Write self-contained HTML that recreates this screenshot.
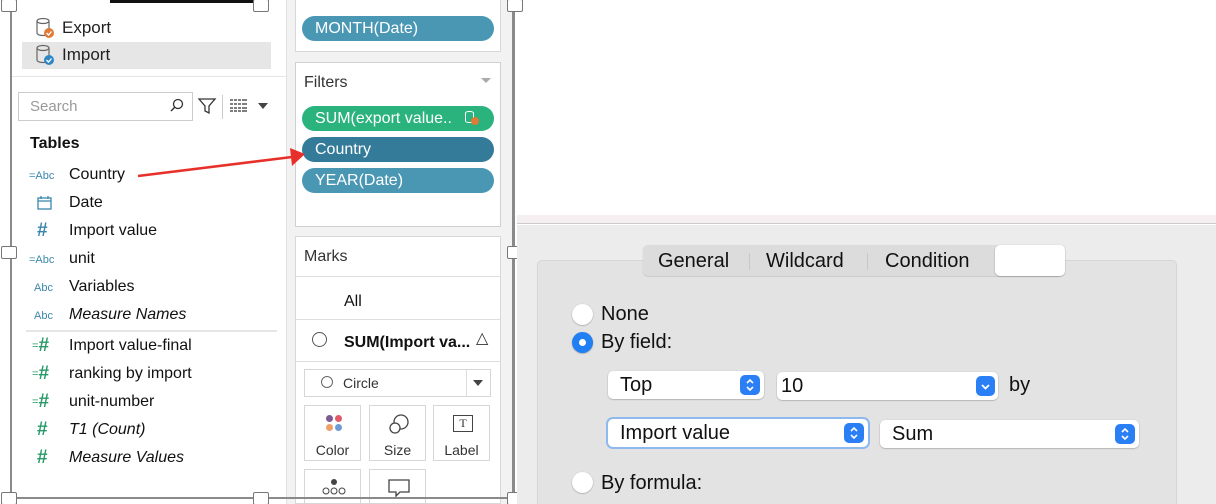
<!DOCTYPE html>
<html><head><meta charset="utf-8"><style>
*{margin:0;padding:0;box-sizing:border-box}
html,body{width:1216px;height:504px;overflow:hidden}
body{position:relative;background:#fff;font-family:"Liberation Sans",sans-serif;color:#222}
.a{position:absolute}
.h{position:absolute;width:16px;height:13px;background:#fff;border:1px solid #777;border-radius:2px}
.pill{position:absolute;left:302px;width:192px;height:25px;border-radius:13px;color:#fff;font-size:16px;line-height:25px;padding-left:13px}
.f{position:absolute;left:69px;font-size:16px;color:#111}
.ic{position:absolute;font-size:11px;color:#3a87ad}
.hash{position:absolute;font-size:19px;color:#2a9a6a;font-weight:bold;line-height:20px}
.hash small{font-size:11px;font-weight:normal;vertical-align:2px}
.mb{position:absolute;width:57px;height:56px;border:1px solid #d6d6d6;background:#fff;font-size:14px;color:#333;text-align:center}
.sel{position:absolute;height:28px;background:#fff;border-radius:5px;box-shadow:0 0.5px 1.5px rgba(0,0,0,.35);font-size:20px;line-height:28px;padding-left:12px;color:#111}
.st{position:absolute;right:4px;top:4px;width:20px;height:20px;border-radius:5px;background:#2b7ff5}
.rad{position:absolute;width:21px;height:21px;border-radius:50%;background:#fff;box-shadow:0 0.5px 1.5px rgba(0,0,0,.35)}
.lb{position:absolute;font-size:20px;color:#111}
</style></head><body>
<!-- middle column -->
<div class="a" style="left:286px;top:0;width:226px;height:504px;background:#f2f2f2;border-left:1px solid #e2e2e2"></div>
<div class="a" style="left:295px;top:0;width:206px;height:52px;background:#fff;border:1px solid #d8d8d8;border-top:none"></div>
<div class="pill" style="top:16px;background:#4a97b4">MONTH(Date)</div>
<div class="a" style="left:295px;top:62px;width:206px;height:165px;background:#fff;border:1px solid #d0d0d0"></div>
<div class="a" style="left:304px;top:74px;font-size:16px;color:#333">Filters</div>
<div class="a" style="left:481px;top:78px;border:5px solid transparent;border-top:5px solid #aaa"></div>
<div class="pill" style="top:106px;background:#2bb37e">SUM(export value..</div>
<div class="a" style="left:465px;top:111px;width:9px;height:12px;border:1px solid #fff;border-radius:4px/2px"></div>
<div class="a" style="left:471px;top:117px;width:8px;height:8px;border-radius:50%;background:#e07a35"></div>
<div class="pill" style="top:137px;background:#347b99">Country</div>
<div class="pill" style="top:168px;background:#4a97b4">YEAR(Date)</div>
<div class="a" style="left:295px;top:236px;width:206px;height:268px;background:#fff;border:1px solid #d8d8d8"></div>
<div class="a" style="left:304px;top:248px;font-size:16px;color:#333">Marks</div>
<div class="a" style="left:296px;top:276px;width:204px;height:1px;background:#ddd"></div>
<div class="a" style="left:344px;top:293px;font-size:16px;color:#111">All</div>
<div class="a" style="left:296px;top:319px;width:204px;height:1px;background:#ddd"></div>
<div class="a" style="left:312px;top:332px;width:15px;height:15px;border:1.5px solid #555;border-radius:50%"></div>
<div class="a" style="left:344px;top:334px;font-size:16px;font-weight:bold;color:#111">SUM(Import va...</div>
<div class="a" style="left:476px;top:328px;font-size:16px;color:#333">△</div>
<div class="a" style="left:296px;top:361px;width:204px;height:1px;background:#ddd"></div>
<div class="a" style="left:304px;top:369px;width:187px;height:28px;border:1px solid #d6d6d6"></div>
<div class="a" style="left:466px;top:370px;width:1px;height:26px;background:#ddd"></div>
<div class="a" style="left:473px;top:380px;border:5px solid transparent;border-top:6px solid #444"></div>
<div class="a" style="left:321px;top:376px;width:12px;height:12px;border:1px solid #666;border-radius:50%"></div>
<div class="a" style="left:343px;top:375px;font-size:14px;color:#333">Circle</div>
<div class="mb" style="left:304px;top:405px"><div style="position:absolute;left:21px;top:9px;width:16px;height:18px">
<span style="position:absolute;left:0;top:0;width:7px;height:7px;border-radius:50%;background:#7d5a92"></span><span style="position:absolute;left:9px;top:0;width:7px;height:7px;border-radius:50%;background:#e15a6a"></span><span style="position:absolute;left:0;top:9px;width:7px;height:7px;border-radius:50%;background:#ef9f6a"></span><span style="position:absolute;left:9px;top:9px;width:7px;height:7px;border-radius:50%;background:#6d9bd3"></span></div><div style="position:absolute;top:36px;width:100%">Color</div></div>
<div class="mb" style="left:369px;top:405px"><svg style="position:absolute;left:18px;top:7px" width="22" height="22"><circle cx="13" cy="9" r="7" fill="none" stroke="#444" stroke-width="1.3"/><circle cx="7" cy="15" r="5" fill="#fff" stroke="#444" stroke-width="1.3"/></svg><div style="position:absolute;top:36px;width:100%">Size</div></div>
<div class="mb" style="left:433px;top:405px"><div style="position:absolute;left:19px;top:9px;width:20px;height:17px;border:1.3px solid #444;font-family:'Liberation Serif';font-size:12px;line-height:14px">T</div><div style="position:absolute;top:36px;width:100%">Label</div></div>
<div class="mb" style="left:304px;top:469px;height:35px"><svg style="position:absolute;left:16px;top:8px" width="26" height="20"><circle cx="13" cy="4" r="3" fill="#444"/><circle cx="5" cy="13" r="3" fill="none" stroke="#444"/><circle cx="13" cy="13" r="3" fill="none" stroke="#444"/><circle cx="21" cy="13" r="3" fill="none" stroke="#444"/></svg></div>
<div class="mb" style="left:369px;top:469px;height:35px"><svg style="position:absolute;left:17px;top:8px" width="24" height="20"><path d="M2 2H22V14H13L9 18V14H2Z" fill="none" stroke="#444" stroke-width="1.3"/></svg></div>

<!-- left panel -->
<div class="a" style="left:22px;top:42px;width:249px;height:27px;background:#e6e6e6"></div>
<svg class="a" style="left:35px;top:17px" width="20" height="22"><path d="M2 4a6 2.5 0 0 1 12 0v12a6 2.5 0 0 1-12 0z M2 4a6 2.5 0 0 0 12 0" fill="none" stroke="#666" stroke-width="1.2"/><circle cx="14" cy="16" r="5" fill="#e07a35"/><path d="M11.5 16l2 2 3-3.5" stroke="#fff" fill="none" stroke-width="1.3"/></svg>
<div class="a" style="left:62px;top:18px;font-size:17px;color:#222">Export</div>
<svg class="a" style="left:35px;top:44px" width="20" height="22"><path d="M2 4a6 2.5 0 0 1 12 0v12a6 2.5 0 0 1-12 0z M2 4a6 2.5 0 0 0 12 0" fill="none" stroke="#666" stroke-width="1.2"/><circle cx="14" cy="16" r="5" fill="#2f86c4"/><path d="M11.5 16l2 2 3-3.5" stroke="#fff" fill="none" stroke-width="1.3"/></svg>
<div class="a" style="left:62px;top:45px;font-size:17px;color:#222">Import</div>
<div class="a" style="left:12px;top:76px;width:274px;height:1px;background:#e6e6e6"></div>
<div class="a" style="left:18px;top:92px;width:175px;height:29px;border:1px solid #ccc;font-size:15px;color:#999;line-height:27px;padding-left:11px">Search</div>
<svg class="a" style="left:169px;top:98px" width="16" height="16"><circle cx="9" cy="6" r="4.5" fill="none" stroke="#333" stroke-width="1.3"/><path d="M6 9L2 13" stroke="#333" stroke-width="1.5"/></svg>
<svg class="a" style="left:197px;top:96px" width="20" height="20"><path d="M2 3H18L12 10V17L8 15V10Z" fill="none" stroke="#333" stroke-width="1.3"/></svg>
<div class="a" style="left:222px;top:95px;width:1px;height:24px;background:#ccc"></div>
<svg class="a" style="left:230px;top:99px" width="18" height="13"><g stroke="#555" stroke-width="1.5"><path d="M0 1H17M0 5H17M0 9H17M0 12H17"/></g><g stroke="#fff" stroke-width="1"><path d="M3.5 0V13M7.5 0V13M11.5 0V13"/></g></svg>
<div class="a" style="left:258px;top:103px;border:5px solid transparent;border-top:6px solid #444"></div>
<div class="a" style="left:30px;top:135px;font-size:16px;font-weight:bold;color:#111">Tables</div>
<div class="ic" style="left:29px;top:170px">=Abc</div><div class="f" style="top:166px">Country</div>
<svg class="a" style="left:37px;top:195px" width="15" height="16"><rect x="1" y="3" width="13" height="11" fill="none" stroke="#3a87ad" stroke-width="1.3"/><path d="M1 6H14M4 1V4M11 1V4" stroke="#3a87ad" stroke-width="1.3"/></svg>
<div class="f" style="top:194px">Date</div>
<div class="hash" style="left:37px;top:221px;color:#3a87ad">#</div><div class="f" style="top:222px">Import value</div>
<div class="ic" style="left:29px;top:254px">=Abc</div><div class="f" style="top:250px">unit</div>
<div class="ic" style="left:34px;top:282px">Abc</div><div class="f" style="top:278px">Variables</div>
<div class="ic" style="left:34px;top:310px">Abc</div><div class="f" style="top:306px;font-style:italic">Measure Names</div>
<div class="a" style="left:26px;top:330px;width:251px;height:2px;background:#e6e6e6"></div>
<div class="hash" style="left:32px;top:336px"><small>=</small>#</div><div class="f" style="top:337px">Import value-final</div>
<div class="hash" style="left:32px;top:364px"><small>=</small>#</div><div class="f" style="top:365px">ranking by import</div>
<div class="hash" style="left:32px;top:392px"><small>=</small>#</div><div class="f" style="top:393px">unit-number</div>
<div class="hash" style="left:37px;top:420px">#</div><div class="f" style="top:421px;font-style:italic">T1 (Count)</div>
<div class="hash" style="left:37px;top:448px">#</div><div class="f" style="top:449px;font-style:italic">Measure Values</div>
<!-- arrow -->
<svg class="a" style="left:130px;top:135px" width="180" height="50"><path d="M8 41L162 22" stroke="#e8302a" stroke-width="2.5"/><path d="M175 19L160 13L162 31Z" fill="#e8302a"/></svg>

<!-- frame -->
<div class="a" style="left:110px;top:0;width:150px;height:3px;background:#111"></div>
<div class="a" style="left:10px;top:0;width:2px;height:500px;background:#8a8a8a"></div>
<div class="a" style="left:512px;top:0;width:3px;height:504px;background:#8a8a8a"></div>
<div class="a" style="left:10px;top:497px;width:505px;height:2px;background:#8a8a8a"></div>
<div class="h" style="left:1px;top:-1px"></div><div class="h" style="left:253px;top:-1px"></div><div class="h" style="left:507px;top:-1px"></div>
<div class="h" style="left:1px;top:246px"></div><div class="h" style="left:507px;top:246px"></div>
<div class="h" style="left:1px;top:492px"></div><div class="h" style="left:253px;top:492px"></div><div class="h" style="left:507px;top:492px"></div>

<!-- right dialog -->
<div class="a" style="left:517px;top:215px;width:699px;height:9px;background:#f5eff1;border-bottom:1px solid #c9c9c9"></div>
<div class="a" style="left:517px;top:225px;width:699px;height:279px;background:#ececec"></div>
<div class="a" style="left:537px;top:260px;width:640px;height:244px;background:#e3e3e3;border:1px solid #d6d6d6;border-bottom:none;border-radius:5px 5px 0 0"></div>
<div class="a" style="left:643px;top:245px;width:420px;height:31px;background:#dcdcdc;border-radius:5px;box-shadow:0 0.5px 1px rgba(0,0,0,.2)"></div>
<div class="a" style="left:995px;top:245px;width:70px;height:31px;background:#fff;border-radius:5px;box-shadow:0 0.5px 1.5px rgba(0,0,0,.35)"></div>
<div class="lb" style="left:658px;top:250px">General</div>
<div class="a" style="left:749px;top:253px;width:1px;height:17px;background:#c8c8c8"></div>
<div class="lb" style="left:766px;top:250px">Wildcard</div>
<div class="a" style="left:867px;top:253px;width:1px;height:17px;background:#c8c8c8"></div>
<div class="lb" style="left:885px;top:250px">Condition</div>
<div class="rad" style="left:572px;top:304px"></div><div class="lb" style="left:601px;top:303px">None</div>
<div class="rad" style="left:572px;top:332px;background:#1f7ff3"><div style="position:absolute;left:7px;top:7px;width:7px;height:7px;border-radius:50%;background:#fff"></div></div><div class="lb" style="left:601px;top:331px">By field:</div>
<div class="sel" style="left:608px;top:371px;width:156px">Top<div class="st"><svg width="20" height="20"><path d="M7 8l3-3 3 3M7 12l3 3 3-3" stroke="#fff" stroke-width="1.6" fill="none"/></svg></div></div>
<div class="sel" style="left:777px;top:372px;width:221px;padding-left:4px">10<div class="st" style="right:3px;width:19px"><svg width="19" height="20"><path d="M6 9l3.5 3.5 3.5-3.5" stroke="#fff" stroke-width="1.8" fill="none"/></svg></div></div>
<div class="lb" style="left:1009px;top:374px">by</div>
<div class="sel" style="left:608px;top:419px;width:260px;box-shadow:0 0 0 2px #8eb9ee">Import value<div class="st"><svg width="20" height="20"><path d="M7 8l3-3 3 3M7 12l3 3 3-3" stroke="#fff" stroke-width="1.6" fill="none"/></svg></div></div>
<div class="sel" style="left:880px;top:420px;width:259px">Sum<div class="st"><svg width="20" height="20"><path d="M7 8l3-3 3 3M7 12l3 3 3-3" stroke="#fff" stroke-width="1.6" fill="none"/></svg></div></div>
<div class="rad" style="left:572px;top:472px"></div><div class="lb" style="left:601px;top:472px">By formula:</div>
</body></html>
